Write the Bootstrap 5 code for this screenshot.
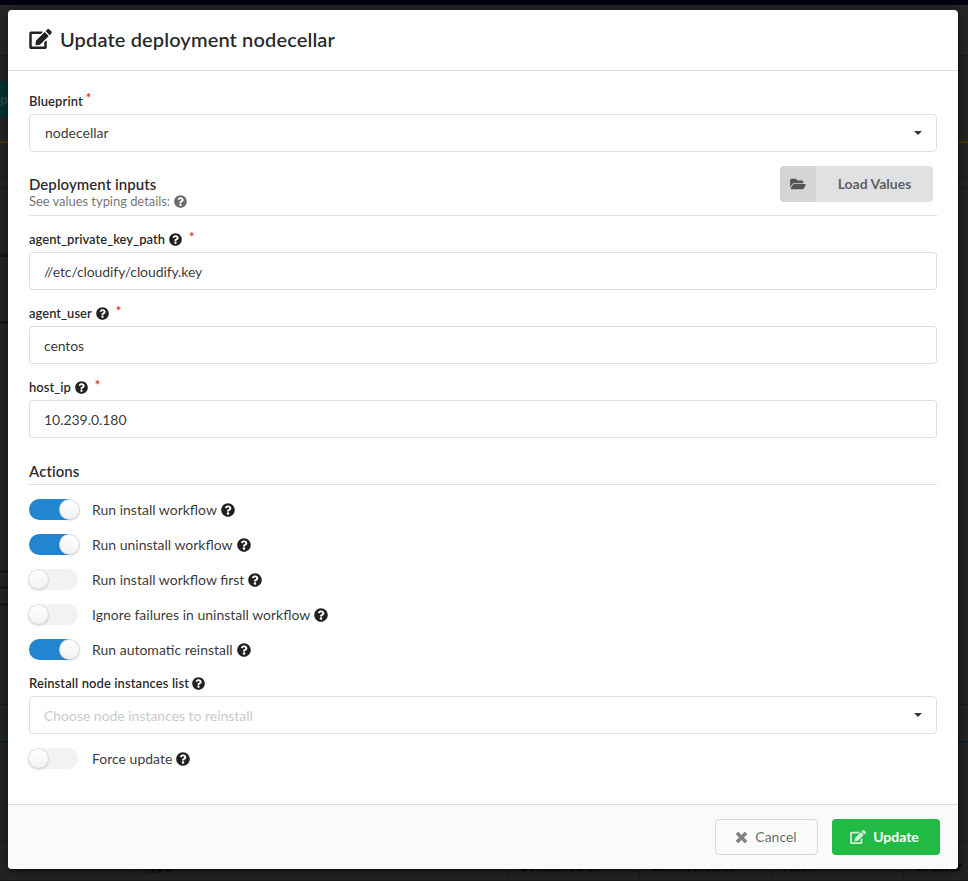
<!DOCTYPE html>
<html lang="en">
<head>
<meta charset="utf-8">
<meta name="viewport" content="width=device-width, initial-scale=1">
<title>Update deployment nodecellar</title>
<link href="https://cdn.jsdelivr.net/npm/bootstrap@5.3.0/dist/css/bootstrap.min.css" rel="stylesheet">
<style>
body{font-family:Lato,"Liberation Sans",sans-serif;font-size:14px;line-height:20px;color:rgba(0,0,0,.87);background:#242424;height:881px}
svg{fill:currentColor;display:block;flex:none}
/* dimmed page behind the dialog */
.backpage{height:881px;background:#242424}
.b-nav{height:5px;background:#00000f}
.b-sub{height:51px;background:#262626;border-bottom:1px solid #1d1d1d}
.b-gap{height:25px}
.b-teal{width:30px;height:36px;background:#00322e;color:#2d4b48;line-height:36px;font-weight:700}
.b-gap2{height:24px}
.b-yellow{height:2px;background:#473600}
.b-table{height:427px;background:
linear-gradient(#1b1b1b 0 0) 0 33px/100% 1px no-repeat,
linear-gradient(#191919 0 0) 0 45px/100% 1px no-repeat,
linear-gradient(#1e1e1e 0 0) 0 79px/100% 1px no-repeat,
linear-gradient(#16161d 0 0) 0 111px/30px 3px no-repeat,
linear-gradient(#16161d 0 0) 0 178px/30px 3px no-repeat}
.b-rows{height:171px;background:
linear-gradient(#16161d 0 0) 0 0/30px 3px no-repeat,
linear-gradient(#16161d 0 0) 0 16px/30px 3px no-repeat,
linear-gradient(#16161d 0 0) 0 33px/30px 3px no-repeat,
linear-gradient(#1f1f1f 0 0) 0 50px/100% 1px no-repeat,
linear-gradient(#1f1f1f 0 0) 0 83px/100% 1px no-repeat,
linear-gradient(#1f1f1f 0 0) 0 116px/100% 1px no-repeat,
linear-gradient(#191919 0 0) 0 134px/100% 1px no-repeat,
linear-gradient(#1f1f1f 0 0) 0 160px/100% 1px no-repeat}
.b-blue{height:2px;background:#0c2233}
.b-foot{height:99px;border-bottom:1px solid #1c1c1c}
.b-heads{height:39px;border-bottom:1px solid #191919;color:#060606;font-weight:700;line-height:18px}
.b-heads div{border-left:1px solid #1c1c1c;padding:15px 0 0 11px;width:132px;flex:none}
.b-heads .b-first{width:130px;border:0}
.b-heads .b-type{width:377px}
/* dialog */
.dlg{padding:10px 10px 0 8px}
.dlg .modal-content{height:859px;border:0;border-radius:4px;background:#fff;box-shadow:1px 3px 3px 0 rgba(0,0,0,.3),1px 3px 15px 2px rgba(0,0,0,.3);color:inherit}
.dlg .modal-header{height:61px;padding:0 21px 2px;border-bottom:1px solid rgba(34,36,38,.15);border-radius:0}
.ttl{font-size:20px;font-weight:600;line-height:26px;margin:-1px 0 0 8px;letter-spacing:.12px;color:rgba(0,0,0,.85)}
.dlg .modal-body{padding:21px 21px 0}
.lbl{font-size:13px;font-weight:600;line-height:18px;height:22px;gap:4px}
.lbl.wide{letter-spacing:.09px;gap:3px}
.lbl svg{margin-top:3px}
.req{color:#db2828;margin-top:-3px}
.req.far{margin:-2px 0 0 3px}
.field{height:38px;border:1px solid rgba(34,36,38,.15);border-radius:4px;padding:0 14px 0 15px;font-size:14px;color:rgba(0,0,0,.8);margin-bottom:14px;box-shadow:none}
input.field{padding-left:14px;letter-spacing:-.1px}
input.field.num{letter-spacing:-.04px}
.field.hint{color:rgba(191,191,191,.87);padding-left:14px;letter-spacing:-.03px}
.hint .words{padding-top:2px}
.caret{width:0;height:0;border:4px solid transparent;border-top:4px solid rgba(0,0,0,.8);border-bottom:0}
.sect{border-bottom:1px solid rgba(34,36,38,.15);height:50px;margin-bottom:14px}
.sect h2{font-size:15px;font-weight:600;line-height:18px;margin:0;padding-top:9px;letter-spacing:.05px;color:rgba(0,0,0,.85)}
.sub{font-size:13px;line-height:16px;color:rgba(0,0,0,.58);letter-spacing:-.05px}
.sect.short{height:33px}
.sect.short h2{padding-top:10px}
.load{width:153px;height:36px;border-radius:4px;background:#e0e1e2;color:rgba(0,0,0,.6);font-weight:700;margin-right:4px;overflow:hidden;padding:0;border:0;font-size:14px}
.load .ico{width:36px;background:rgba(0,0,0,.05)}
.load .words{padding-bottom:2px}
.tog{height:21px;margin-bottom:14px}
.track{width:49px;height:21px;border-radius:11px;background:#f2f2f2}
.knob{width:21px;height:21px;border-radius:50%;background:#fff linear-gradient(transparent,rgba(0,0,0,.05));box-shadow:0 1px 2px 0 rgba(34,36,38,.15),0 0 0 1px rgba(34,36,38,.15) inset;margin-left:-1px;flex:none}
.on .track{background:#2185d0}
.on .knob{margin-left:30px}
.tog .txt{margin:1px 4px 0 14px;color:rgba(0,0,0,.8)}
.dlg .modal-footer{height:65px;padding:0 18px 0 0;background:#f9fafb;border-top:1px solid rgba(34,36,38,.15);gap:14px;border-radius:0 0 4px 4px}
.act{height:36px;border-radius:4px;font-size:14px;line-height:20px;margin:0;padding:0}
.cancel{width:103px;border:1px solid #d6d8d9;color:rgba(0,0,0,.6)}
.cancel svg{opacity:.8}
.upd{width:108px;background:#21ba45;color:#fff;font-weight:700;gap:7px;padding-right:3px}
.upd svg{opacity:.8}
</style>
</head>
<body class="overflow-hidden position-relative">
<svg class="d-none">
<symbol id="q" viewBox="0 0 512 512"><path d="M504 256c0 136.997-111.043 248-248 248S8 392.997 8 256C8 119.083 119.043 8 256 8s248 111.083 248 248zM262.655 90c-54.497 0-89.255 22.957-116.549 63.758-3.536 5.286-2.353 12.415 2.715 16.258l34.699 26.31c5.205 3.947 12.621 3.008 16.665-2.122 17.864-22.658 30.113-35.797 57.303-35.797 20.429 0 45.698 13.148 45.698 32.958 0 14.976-12.363 22.667-32.534 33.976C247.128 238.528 216 254.941 216 296v4c0 6.627 5.373 12 12 12h56c6.627 0 12-5.373 12-12v-1.333c0-28.462 83.186-29.647 83.186-106.667 0-58.002-60.165-102-116.531-102zM256 338c-25.365 0-46 20.635-46 46 0 25.364 20.635 46 46 46s46-20.636 46-46c0-25.365-20.635-46-46-46z"/></symbol>
<symbol id="edit" viewBox="0 0 576 512"><path d="M402.6 83.2l90.2 90.2c3.8 3.8 3.8 10 0 13.8L274.4 405.6l-92.8 10.3c-12.4 1.4-22.9-9.1-21.5-21.5l10.3-92.8L388.8 83.2c3.8-3.8 10-3.8 13.8 0zm162-22.9l-48.8-48.8c-15.2-15.2-39.9-15.2-55.2 0l-35.4 35.4c-3.8 3.8-3.8 10 0 13.8l90.2 90.2c3.8 3.8 10 3.8 13.8 0l35.4-35.4c15.2-15.3 15.2-40 0-55.2zM384 346.2V448H64V128h229.8c3.2 0 6.2-1.3 8.5-3.5l40-40c7.6-7.6 2.2-20.5-8.5-20.5H48C21.5 64 0 85.5 0 112v352c0 26.5 21.5 48 48 48h352c26.5 0 48-21.5 48-48V306.2c0-10.7-12.9-16-20.5-8.5l-40 40c-2.2 2.3-3.5 5.3-3.5 8.5z"/></symbol>
<symbol id="folder" viewBox="0 0 576 512"><path d="M572.694 292.093L500.27 416.248A63.997 63.997 0 0 1 444.989 448H45.025c-18.523 0-30.064-20.093-20.731-36.093l72.424-124.155A64 64 0 0 1 152 256h399.964c18.523 0 30.064 20.093 20.73 36.093zM152 224h328v-48c0-26.51-21.49-48-48-48H272l-64-64H48C21.49 64 0 85.49 0 112v278.046l69.077-118.418C86.214 242.25 117.989 224 152 224z"/></symbol>
<symbol id="x" viewBox="110 366 1188 1188"><path d="M1298 1322q0 40-28 68l-136 136q-28 28-68 28t-68-28L704 1232l-294 294q-28 28-68 28t-68-28L138 1390q-28-28-28-68t28-68l294-294L138 666q-28-28-28-68t28-68L274 394q28-28 68-28t68 28l294 294 294-294q28-28 68-28t68 28l136 136q28 28 28 68t-28 68L976 960l294 294q28 28 28 68z"/></symbol>
</svg>
<div class="backpage overflow-hidden" aria-hidden="true">
<div class="b-nav"></div><div class="b-sub"></div><div class="b-gap"></div>
<div class="b-teal">pe</div><div class="b-gap2"></div>
<div class="b-yellow"></div><div class="b-table"></div><div class="b-rows"></div><div class="b-blue"></div><div class="b-foot"></div>
<div class="b-heads d-flex"><div class="b-first"></div><div class="b-type">Type</div><div>Contained in</div><div>Connected to</div><div>Host</div><div>Creator</div></div>
</div>
<div class="dlg position-absolute top-0 start-0 w-100">
<div class="modal-content">
<div class="modal-header d-flex justify-content-start">
<svg width="23" height="20"><use href="#edit"/></svg><h1 class="ttl">Update deployment nodecellar</h1>
</div>
<div class="modal-body">
<div class="lbl wide d-flex align-items-start">Blueprint<span class="req">*</span></div>
<div class="field d-flex align-items-center justify-content-between"><span>nodecellar</span><span class="caret"></span></div>
<div class="sect d-flex justify-content-between">
<div><h2>Deployment inputs</h2><div class="sub d-flex align-items-center gap-1">See values typing details: <svg width="13" height="13"><use href="#q"/></svg></div></div>
<button class="btn load d-flex"><span class="ico h-100 d-flex align-items-center justify-content-center"><svg width="16" height="14"><use href="#folder"/></svg></span><span class="words flex-fill align-self-center">Load Values</span></button>
</div>
<div class="lbl d-flex align-items-start">agent_private_key_path <svg width="13" height="13"><use href="#q"/></svg><span class="req far">*</span></div>
<input class="form-control field" value="//etc/cloudify/cloudify.key" aria-label="agent_private_key_path">
<div class="lbl d-flex align-items-start">agent_user <svg width="13" height="13"><use href="#q"/></svg><span class="req far">*</span></div>
<input class="form-control field" value="centos" aria-label="agent_user">
<div class="lbl d-flex align-items-start">host_ip <svg width="13" height="13"><use href="#q"/></svg><span class="req far">*</span></div>
<input class="form-control field num" value="10.239.0.180" aria-label="host_ip">
<div class="sect short"><h2>Actions</h2></div>
<div class="tog on d-flex align-items-center"><div class="track d-flex"><div class="knob"></div></div><span class="txt">Run install workflow</span><svg width="14" height="14"><use href="#q"/></svg></div>
<div class="tog on d-flex align-items-center"><div class="track d-flex"><div class="knob"></div></div><span class="txt">Run uninstall workflow</span><svg width="14" height="14"><use href="#q"/></svg></div>
<div class="tog d-flex align-items-center"><div class="track d-flex"><div class="knob"></div></div><span class="txt">Run install workflow first</span><svg width="14" height="14"><use href="#q"/></svg></div>
<div class="tog d-flex align-items-center"><div class="track d-flex"><div class="knob"></div></div><span class="txt">Ignore failures in uninstall workflow</span><svg width="14" height="14"><use href="#q"/></svg></div>
<div class="tog on d-flex align-items-center"><div class="track d-flex"><div class="knob"></div></div><span class="txt">Run automatic reinstall</span><svg width="14" height="14"><use href="#q"/></svg></div>
<div class="lbl wide d-flex align-items-start">Reinstall node instances list <svg width="13" height="13"><use href="#q"/></svg></div>
<div class="field hint d-flex align-items-center justify-content-between"><span class="words">Choose node instances to reinstall</span><span class="caret"></span></div>
<div class="tog d-flex align-items-center"><div class="track d-flex"><div class="knob"></div></div><span class="txt">Force update</span><svg width="14" height="14"><use href="#q"/></svg></div>
</div>
<div class="modal-footer d-flex justify-content-end mt-auto"><button class="btn act cancel d-flex align-items-center justify-content-center gap-2"><svg width="11" height="11"><use href="#x"/></svg>Cancel</button><button class="btn act upd d-flex align-items-center justify-content-center"><svg width="16" height="14"><use href="#edit"/></svg>Update</button></div>
</div></div>
<script src="https://cdn.jsdelivr.net/npm/bootstrap@5.3.0/dist/js/bootstrap.bundle.min.js"></script>
</body>
</html>
